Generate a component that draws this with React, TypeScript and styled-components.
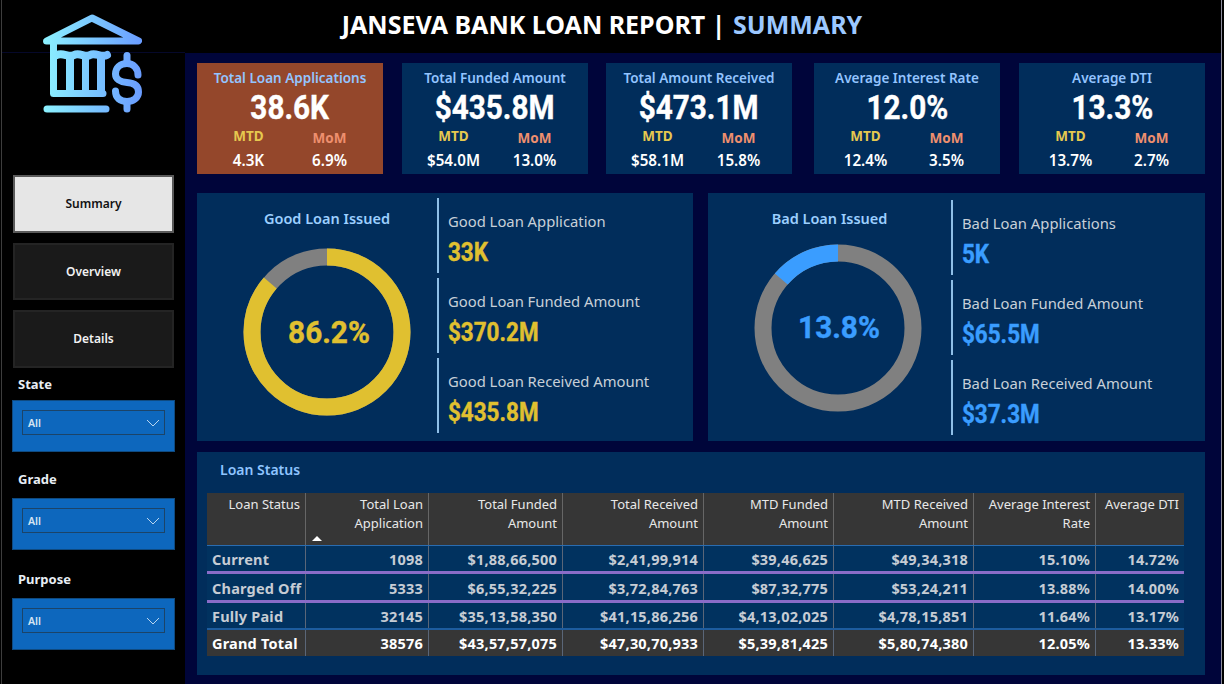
import React from 'react'
import styled, { createGlobalStyle } from 'styled-components'

const UI_FONT = `"Noto Sans", "Open Sans", "Liberation Sans", sans-serif`
const NUM_FONT = `"Roboto", "Liberation Sans", sans-serif`

const Global = createGlobalStyle`
  html, body { margin: 0; padding: 0; background: #000; }
  * { box-sizing: border-box; }
  body { font-family: ${UI_FONT}; }
`

const kpis = [
  { title: 'Total Loan Applications', value: '38.6K', mtd: '4.3K', mom: '6.9%', gap: 0, accent: true },
  { title: 'Total Funded Amount', value: '$435.8M', mtd: '$54.0M', mom: '13.0%', gap: 19 },
  { title: 'Total Amount Received', value: '$473.1M', mtd: '$58.1M', mom: '15.8%', gap: 18 },
  { title: 'Average Interest Rate', value: '12.0%', mtd: '12.4%', mom: '3.5%', gap: 22 },
  { title: 'Average DTI', value: '13.3%', mtd: '13.7%', mom: '2.7%', gap: 19 },
]

const good = [
  { label: 'Good Loan Application', value: '33K' },
  { label: 'Good Loan Funded Amount', value: '$370.2M' },
  { label: 'Good Loan Received Amount', value: '$435.8M' },
]

const bad = [
  { label: 'Bad Loan Applications', value: '5K' },
  { label: 'Bad Loan Funded Amount', value: '$65.5M' },
  { label: 'Bad Loan Received Amount', value: '$37.3M' },
]

const columns = [
  'Loan Status',
  'Total Loan Application',
  'Total Funded Amount',
  'Total Received Amount',
  'MTD Funded Amount',
  'MTD Received Amount',
  'Average Interest Rate',
  'Average DTI',
]

const rows = [
  { cells: ['Current', '1098', '$1,88,66,500', '$2,41,99,914', '$39,46,625', '$49,34,318', '15.10%', '14.72%'], h: 25, line: '3px solid #8a6cc8' },
  { cells: ['Charged Off', '5333', '$6,55,32,225', '$3,72,84,763', '$87,32,775', '$53,24,211', '13.88%', '14.00%'], h: 26, line: '3px solid #8a6cc8' },
  { cells: ['Fully Paid', '32145', '$35,13,58,350', '$41,15,86,256', '$4,13,02,025', '$4,78,15,851', '11.64%', '13.17%'], h: 25, line: '2px solid #1d5c9e' },
]

const total = ['Grand Total', '38576', '$43,57,57,075', '$47,30,70,933', '$5,39,81,425', '$5,80,74,380', '12.05%', '13.33%']

const BankLogo = () => (
  <LogoSvg viewBox="0 0 99 99" width="99" height="99">
    <defs>
      <linearGradient id="bankGrad" gradientUnits="userSpaceOnUse" x1="0" x2="99" y1="0" y2="0">
        <stop offset="0" stopColor="#8cf2ff" />
        <stop offset="1" stopColor="#6a9cff" />
      </linearGradient>
    </defs>
    <g fill="none" stroke="url(#bankGrad)" strokeWidth="7" strokeLinecap="round" strokeLinejoin="round">
      <path d="M3.5 27 L49 4 L95.500 27 Z" />
      <path d="M10.5 27 V79.5 H60" />
      <path d="M4 95 H63" />
      <path d="M14 41 C20 38 26 44 31 41 C37 38 42 44 47 41 C53 38 58 44 64 41" strokeWidth="8" />
      <path d="M95 61 C95 54 90 49.500 84 49.500 C77 49.500 72.500 54 72.500 60 C72.500 65 77 68 84 68.500 C91 69 95.500 72 95.500 78 C95.500 84 90 87.500 84 87.500 C77 87.500 72.500 84 72.500 77" />
      <path d="M84 41.500 V49" />
      <path d="M84 88 V95" />
    </g>
    <g fill="url(#bankGrad)">
      <rect x="23" y="42" width="8" height="36" />
      <rect x="39" y="42" width="7" height="36" />
      <rect x="54" y="42" width="8" height="36" />
    </g>
  </LogoSvg>
)

const Donut = ({ percent, main, rest }: { percent: number; main: string; rest: string }) => {
  // percent runs clockwise from the top, or anticlockwise when negative
  const r = 75
  const c = 2 * Math.PI * r
  const len = (Math.abs(percent) / 100) * c
  const offset = percent < 0 ? len : 0
  return (
    <svg viewBox="0 0 168 168" width="168" height="168">
      <g transform="rotate(-90 84 84)">
        <circle cx="84" cy="84" r={r} fill="none" stroke={rest} strokeWidth="17" />
        <circle
          cx="84"
          cy="84"
          r={r}
          fill="none"
          stroke={main}
          strokeWidth="17"
          strokeDasharray={`${len} ${c - len}`}
          strokeDashoffset={offset}
        />
      </g>
    </svg>
  )
}

interface LoanPanelProps {
  title: string
  percent: number
  shown: string
  color: string
  stats: { label: string; value: string }[]
  width: number
  side: number
  sidePad: number
  donutTop: number
  donutLeft: number
  labelLift: number
  labelShift: number
  statTop: number
}

const LoanPanel: React.FC<LoanPanelProps> = ({
  title, percent, shown, color, stats, width, side, sidePad, donutTop, donutLeft, labelLift, labelShift, statTop,
}) => (
  <Panel $width={width}>
    <DonutSide $width={side} $pad={sidePad}>
      <PanelTitle>{title}</PanelTitle>
      <DonutWrap $top={donutTop} $left={donutLeft}>
        <Donut percent={percent} main={color} rest="#808080" />
        <DonutLabel $color={color} $lift={labelLift} $shift={labelShift}>
          <Narrow $scale={0.93}>{shown}</Narrow>
        </DonutLabel>
      </DonutWrap>
    </DonutSide>
    <StatList $top={statTop}>
      {stats.map(s => (
        <Stat key={s.label}>
          <StatLabel>{s.label}</StatLabel>
          <StatValue $color={color}>{s.value}</StatValue>
        </Stat>
      ))}
    </StatList>
  </Panel>
)

const App = () => (
  <Page>
    <Global />
    <Sidebar>
      <BankLogo />
      <Nav>
        <NavButton $active>Summary</NavButton>
        <NavButton>Overview</NavButton>
        <NavButton>Details</NavButton>
      </Nav>
      {[
        { name: 'State', top: 7.5, gap: 7 },
        { name: 'Grade', top: 18, gap: 10 },
        { name: 'Purpose', top: 20, gap: 10 },
      ].map(f => (
        <div key={f.name}>
          <FilterLabel $top={f.top} $gap={f.gap}>{f.name}</FilterLabel>
          <Slicer>
            <SlicerBox>
              All
              <svg width="14" height="8" viewBox="0 0 14 8">
                <path d="M1 1 L7 7 L13 1" fill="none" stroke="#b9d6f0" strokeWidth="1" />
              </svg>
            </SlicerBox>
          </Slicer>
        </div>
      ))}
    </Sidebar>
    <Content>
      <Header>
        JANSEVA BANK LOAN REPORT | <HeaderAccent>SUMMARY</HeaderAccent>
      </Header>
      <Main>
        <KpiRow>
          {kpis.map(k => (
            <KpiCard key={k.title} $accent={k.accent} $gap={k.gap}>
              <KpiTitle>{k.title}</KpiTitle>
              <KpiValue>
                <Narrow $scale={0.9}>{k.value}</Narrow>
              </KpiValue>
              <KpiSplit>
                <KpiCol>
                  <Mtd>MTD</Mtd>
                  <KpiSmall>{k.mtd}</KpiSmall>
                </KpiCol>
                <KpiCol>
                  <Mom>MoM</Mom>
                  <KpiSmall>{k.mom}</KpiSmall>
                </KpiCol>
              </KpiSplit>
            </KpiCard>
          ))}
        </KpiRow>
        <PanelRow>
          <LoanPanel title="Good Loan Issued" percent={86.2} shown="86.2%" color="#e0c030" stats={good} width={496} side={240} sidePad={20} donutTop={19} donutLeft={0} labelLift={0} labelShift={5} statTop={5} />
          <LoanPanel title="Bad Loan Issued" percent={-13.8} shown="13.8%" color="#3a9dff" stats={bad} width={497} side={243} sidePad={0} donutTop={15} donutLeft={17} labelLift={3} labelShift={2} statTop={7} />
        </PanelRow>
        <TablePanel>
          <TableTitle>Loan Status</TableTitle>
          <Table>
            <HeadRow>
              {columns.map((c, i) => (
                <HeadCell key={c}>
                  {c}
                  {i === 1 && <SortArrow />}
                </HeadCell>
              ))}
            </HeadRow>
            {rows.map(r => (
              <BodyRow key={r.cells[0]} $height={r.h} $line={r.line}>
                {r.cells.map((c, i) => (
                  <Cell key={i} $first={i === 0}>{c}</Cell>
                ))}
              </BodyRow>
            ))}
            <TotalRow>
              {total.map((c, i) => (
                <TotalCell key={i} $first={i === 0}>{c}</TotalCell>
              ))}
            </TotalRow>
          </Table>
        </TablePanel>
      </Main>
    </Content>
  </Page>
)

export default App

// Styles
const Page = styled.div`
  display: flex;
  width: 1222px;
  height: 684px;
  overflow: hidden;
  background: #000;
  padding-left: 1px;
  border-right: 1px solid #8d8d9c;
`

const Sidebar = styled.aside`
  width: 184px;
  flex: none;
  padding-top: 14px;
  border-left: 1px solid #3d3d3d;
  background: linear-gradient(#05082a, #05082a) 0 52px / 100% 1px no-repeat;
`

const LogoSvg = styled.svg`
  display: block;
  margin-left: 41px;
`

const Nav = styled.nav`
  display: flex;
  flex-direction: column;
  gap: 10px;
  margin: 62px 0 0 11px;
`

const NavButton = styled.div<{ $active?: boolean }>`
  width: 161px;
  height: 57.5px;
  display: flex;
  align-items: center;
  justify-content: center;
  font-size: 12px;
  font-weight: 600;
  background: ${p => (p.$active ? '#e6e6e6' : '#1a1a1a')};
  color: ${p => (p.$active ? '#111' : '#f2f2f2')};
  border: 2px solid ${p => (p.$active ? '#5a5a5a' : '#242424')};
`

const FilterLabel = styled.div<{ $top: number; $gap: number }>`
  height: 18px;
  line-height: 18px;
  margin: ${p => p.$top}px 0 ${p => p.$gap}px 16px;
  font-size: 13px;
  font-weight: 700;
  color: #e8eef4;
`

const Slicer = styled.div`
  width: 163px;
  height: 52px;
  margin-left: 10px;
  padding: 9px 9px;
  background: #0d67bd;
  border: 1px solid #0f4a80;
`

const SlicerBox = styled.div`
  height: 25px;
  display: flex;
  align-items: center;
  justify-content: space-between;
  padding: 0 4px 0 5px;
  font-size: 10.5px;
  font-weight: 600;
  color: #d5e4f2;
  border: 1px solid #1c4468;
`

const Content = styled.div`
  flex: 1;
  display: flex;
  flex-direction: column;
  min-width: 0;
`

const Header = styled.header`
  height: 53px;
  flex: none;
  padding-bottom: 5px;
  display: flex;
  align-items: center;
  justify-content: center;
  gap: 0.3em;
  margin-right: 202px;
  font-size: 25px;
  font-weight: 700;
  color: #fff;
`

const HeaderAccent = styled.span`
  color: #9cc8ff;
`

const Main = styled.main`
  flex: 1;
  background: #00053a;
  padding: 10px 0 9px 12px;
`

const KpiRow = styled.div`
  display: flex;
`

const KpiCard = styled.div<{ $accent?: boolean; $gap: number }>`
  width: 186px;
  height: 111px;
  margin-left: ${p => p.$gap}px;
  padding-top: 5px;
  display: flex;
  flex-direction: column;
  align-items: center;
  background: ${p => (p.$accent ? '#94472b' : '#012d5b')};
`

const KpiTitle = styled.div`
  height: 20px;
  line-height: 20px;
  font-size: 13.5px;
  font-weight: 600;
  color: #93c4ff;
  white-space: nowrap;
`

// Roboto squeezed sideways, to get the narrow DIN look of the big numbers
const Narrow = styled.span<{ $scale: number }>`
  display: inline-block;
  transform: scaleX(${p => p.$scale});
  -webkit-text-stroke: 0.4px currentColor;
`

const KpiValue = styled.div`
  height: 39px;
  line-height: 39px;
  font-family: ${NUM_FONT};
  font-size: 33px;
  font-weight: 700;
  color: #fff;
  white-space: nowrap;
`

const KpiSplit = styled.div`
  display: flex;
  width: 100%;
  padding-left: 11px;
  margin-top: -2px;
`

const KpiCol = styled.div`
  width: 81px;
  display: flex;
  flex-direction: column;
  align-items: center;
`

const Mtd = styled.div`
  height: 22px;
  line-height: 22px;
  font-size: 13.5px;
  font-weight: 700;
  color: #e6c84f;
`

const Mom = styled(Mtd)`
  margin-top: 2px;
  margin-bottom: -2px;
  color: #ee8f6e;
`

const KpiSmall = styled.div`
  margin-top: 2px;
  height: 22px;
  line-height: 22px;
  font-size: 15.2px;
  font-weight: 600;
  color: #fff;
  white-space: nowrap;
`

const PanelRow = styled.div`
  display: flex;
  gap: 15px;
  margin-top: 19px;
`

const Panel = styled.section<{ $width: number }>`
  width: ${p => p.$width}px;
  height: 248px;
  display: flex;
  background: #012d5b;
`

const DonutSide = styled.div<{ $width: number; $pad: number }>`
  width: ${p => p.$width}px;
  flex: none;
  display: flex;
  flex-direction: column;
  align-items: center;
  padding: 14px 0 0 ${p => p.$pad}px;
`

const PanelTitle = styled.h3`
  margin: 0;
  height: 22px;
  line-height: 22px;
  font-size: 14.5px;
  font-weight: 600;
  color: #9ccfff;
`

const DonutWrap = styled.div<{ $top: number; $left: number }>`
  position: relative;
  margin-top: ${p => p.$top}px;
  margin-left: ${p => p.$left}px;
  width: 168px;
  height: 168px;
`

const DonutLabel = styled.div<{ $color: string; $lift: number; $shift: number }>`
  position: absolute;
  inset: 0;
  padding: 0 0 ${p => p.$lift}px ${p => p.$shift}px;
  display: flex;
  align-items: center;
  justify-content: center;
  font-family: ${NUM_FONT};
  font-size: 32px;
  font-weight: 700;
  color: ${p => p.$color};
`

const StatList = styled.div<{ $top: number }>`
  display: flex;
  flex-direction: column;
  gap: 5px;
  padding-top: ${p => p.$top}px;
`

const Stat = styled.div`
  width: 230px;
  height: 75px;
  padding: 12px 0 0 9px;
  border-left: 2px solid #8fbfe8;
`

const StatLabel = styled.div`
  height: 22px;
  line-height: 22px;
  font-size: 14.8px;
  color: #c8d0d8;
  white-space: nowrap;
`

const StatValue = styled.div<{ $color: string }>`
  margin-top: 5px;
  height: 30px;
  line-height: 30px;
  font-family: ${NUM_FONT};
  font-size: 25.5px;
  font-weight: 700;
  color: ${p => p.$color};
  transform: scaleX(0.88);
  transform-origin: left center;
  -webkit-text-stroke: 0.4px currentColor;
`

const TablePanel = styled.section`
  width: 1008px;
  height: 223px;
  margin-top: 11px;
  padding: 8px 0 0 10px;
  background: #012d5b;
`

const TableTitle = styled.h3`
  margin: 0 0 13px 13px;
  height: 20px;
  line-height: 20px;
  font-size: 14px;
  font-weight: 600;
  color: #8fc4ff;
`

const Table = styled.div`
  width: 977px;
`

const gridColumns = '99px 123px 134px 141px 130px 140px 122px 88px'

const HeadRow = styled.div`
  display: grid;
  grid-template-columns: ${gridColumns};
  height: 53px;
  background: #363636;
  border-bottom: 1px solid #2a6cb0;
`

const HeadCell = styled.div`
  position: relative;
  padding: 2px 5px 0 0;
  text-align: right;
  font-size: 13px;
  line-height: 19px;
  color: #e8e8e8;
  border-right: 1px solid #666;

  &:last-child {
    border-right: none;
  }
`

const SortArrow = styled.span`
  position: absolute;
  left: 6px;
  bottom: 4px;
  width: 0;
  height: 0;
  border-left: 5px solid transparent;
  border-right: 5px solid transparent;
  border-bottom: 5px solid #fff;
`

const BodyRow = styled.div<{ $height: number; $line: string }>`
  display: grid;
  grid-template-columns: ${gridColumns};
  height: ${p => p.$height + parseInt(p.$line)}px;
  background: #01325f;
  color: #c6ccd4;
  border-bottom: ${p => p.$line};
`

const TotalRow = styled.div`
  display: grid;
  grid-template-columns: ${gridColumns};
  height: 26px;
  background: #363636;
  color: #fff;
`

const Cell = styled.div<{ $first?: boolean }>`
  display: flex;
  align-items: center;
  justify-content: ${p => (p.$first ? 'flex-start' : 'flex-end')};
  padding: 1px 5px 0;
  font-size: 14.5px;
  font-weight: 700;
  letter-spacing: 0.2px;
  white-space: nowrap;
  border-right: 1px solid #5a6678;

  &:last-child {
    border-right: none;
  }
`

const TotalCell = styled(Cell)`
  padding-top: 0;
`
